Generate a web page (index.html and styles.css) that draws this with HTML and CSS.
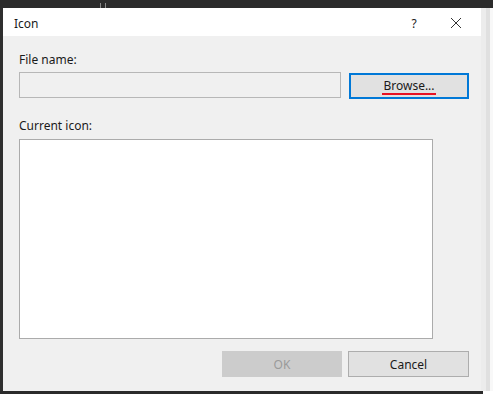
FILE: index.html
```html
<!DOCTYPE html>
<html>
<head>
<meta charset="utf-8">
<link rel="stylesheet" href="styles.css">
</head>
<body>
<div class="screen">
  <div class="topbar"><span class="grip"></span></div>
  <div class="row">
    <div class="dialog">
      <div class="titlebar">
        <span class="title">Icon</span>
        <span class="help">?</span>
        <span class="close">
          <svg width="12" height="12" viewBox="0 0 12 12"><path d="M1 1 L11 11 M11 1 L1 11" stroke="#333" stroke-width="1" fill="none"/></svg>
        </span>
      </div>
      <div class="content">
        <div class="label">File name:</div>
        <div class="fileline">
          <div class="input"></div>
          <button class="btn browse"><span class="btext">Browse...</span></button>
        </div>
        <div class="label label2">Current icon:</div>
        <div class="iconbox"></div>
        <div class="actions">
          <button class="btn ok">OK</button>
          <button class="btn cancel">Cancel</button>
        </div>
      </div>
    </div>
    <div class="side"></div>
  </div>
  <div class="bottombar"></div>
</div>
</body>
</html>
```
FILE: styles.css
```css
html, body {
  margin: 0;
  padding: 0;
  background: #ffffff;
  font-family: "Noto Sans", "Open Sans", sans-serif;
  font-size: 12px;
  color: #1a1a1a;
}
.screen {
  width: 493px;
  height: 396px;
  display: flex;
  flex-direction: column;
}
.topbar {
  height: 8px;
  flex: 0 0 8px;
  background: #2b2b2b;
  position: relative;
}
.grip {
  position: absolute;
  left: 100px;
  top: 3px;
  width: 4px;
  height: 5px;
  border-left: 1px solid #888;
  border-right: 1px solid #888;
}
.row {
  display: flex;
  height: 383px;
  flex: 0 0 383px;
}
.dialog {
  width: 478px;
  border-left: 3px solid #2f2f2f;
  display: flex;
  flex-direction: column;
  background: #f0f0f0;
}
.side {
  width: 12px;
  background: linear-gradient(to right, #ececec 0 5px, #e0e0e0 5px 9px, #f8f8f8 9px);
}
.bottombar {
  height: 3px;
  flex: 0 0 3px;
  width: 483px;
  background: #2b2b2b;
}
.titlebar {
  height: 28px;
  box-sizing: border-box;
  padding-top: 2px;
  background: #ffffff;
  display: flex;
  align-items: center;
  padding-left: 11px;
}
.title {
  flex: 1;
}
.help {
  width: 20px;
  text-align: center;
  margin-right: 26px;
}
.close {
  width: 12px;
  height: 12px;
  margin-right: 19px;
  display: flex;
}
.content {
  flex: 1;
  padding: 15px 0 0 16px;
  display: flex;
  flex-direction: column;
}
.label {
  height: 18px;
  line-height: 18px;
}
.label2 {
  margin-top: 18px;
}
.fileline {
  display: flex;
  margin-top: 3px;
  gap: 8px;
}
.input {
  width: 320px;
  height: 24px;
  border: 1px solid #b7b7b7;
  background: #f0f0f0;
}
.btn {
  font-family: inherit;
  font-size: 12px;
  height: 26px;
  padding: 0;
  border: 1px solid #adadad;
  background: #e1e1e1;
  color: #1a1a1a;
}
.browse {
  width: 120px;
  border: 2px solid #0078d7;
  margin-top: 1px;
}
.btext {
  display: inline-block;
  border-bottom: 2px solid #e81123;
  line-height: 14px;
  padding: 0 1px;
}
.iconbox {
  margin-top: 4px;
  width: 412px;
  height: 198px;
  background: #ffffff;
  border: 1px solid #ababab;
}
.actions {
  display: flex;
  gap: 6px;
  margin-top: 12px;
  padding-left: 203px;
}
.ok {
  width: 120px;
  background: #cccccc;
  border-color: #cccccc;
  color: #9a9a9a;
}
.cancel {
  width: 121px;
}
```
